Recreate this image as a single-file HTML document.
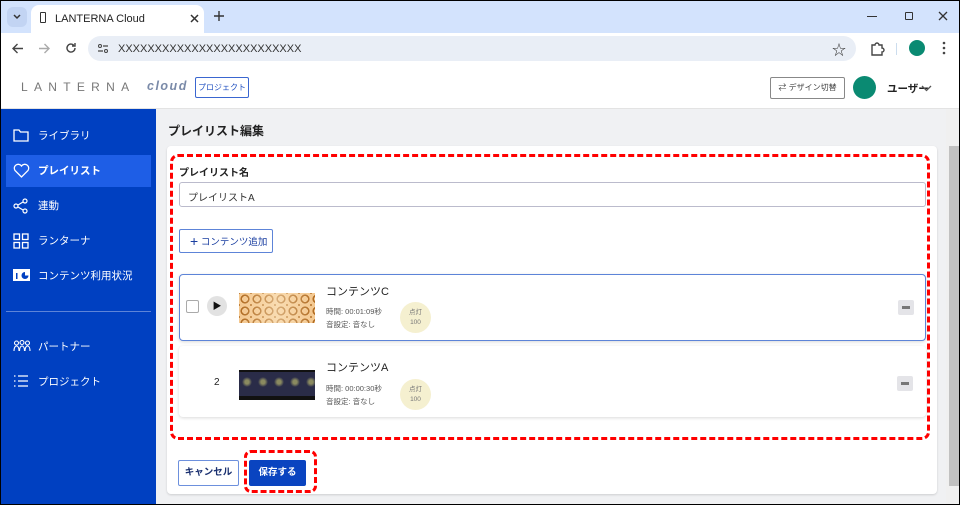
<!DOCTYPE html>
<html><head><meta charset="utf-8"><style>
*{box-sizing:border-box;margin:0;padding:0}
body{width:960px;height:505px;overflow:hidden;font-family:"Liberation Sans","Noto Sans CJK JP",sans-serif;background:#000;position:relative}
.a{position:absolute}
#win{left:1px;top:1px;width:958px;height:503px;background:#f0f1f3;overflow:hidden}
.tabbar{left:0;top:0;width:958px;height:32px;background:#d3e3fd}
.tab{left:30px;top:4px;width:173px;height:28px;background:#fff;border-radius:8px 8px 0 0;font-size:11px;color:#222}
.tool{left:0;top:32px;width:958px;height:31px;background:#fff}
.url{left:87px;top:3px;width:768px;height:25px;background:#e9eef6;border-radius:13px;font-size:11px;color:#333}
.hdr{left:0;top:63px;width:958px;height:45px;background:#fff;border-bottom:1px solid #e3e3e3}
.side{left:0;top:108px;width:155px;height:400px;background:#0040c1;color:#fff;font-size:10.5px}
.si{left:12px;height:20px;line-height:20px;width:140px}
.si span{position:absolute;left:25px;white-space:nowrap}
.si svg{position:absolute;left:0;top:2px}
.card{left:166px;top:145px;width:770px;height:348px;background:#fff;border-radius:4px;box-shadow:0 1px 2px rgba(0,0,0,.15)}
.dash{border:3px dashed #f00;border-radius:8px}
.item{left:178px;width:747px;background:#fff;border-radius:4px}
.meta{font-size:7.5px;color:#555;line-height:13px}
.badge{width:31px;height:31px;border-radius:50%;background:#f5f0d0;color:#777;font-size:6.5px;text-align:center;line-height:10px;padding-top:6px}
.eq{width:16px;height:15px;background:#e4e4e8;border-radius:2px}
.eq:after{content:"";position:absolute;left:4px;top:6px;width:8px;height:3px;background:#777}
</style></head><body>
<div id="win" class="a">
<div class="a tabbar">
 <div class="a" style="left:6px;top:6px;width:20px;height:20px;background:#c2d4f3;border-radius:6px"><svg class="a" style="left:6px;top:7px" width="8" height="6"><path d="M1 1l3 3 3-3" stroke="#333" stroke-width="1.5" fill="none"/></svg></div>
 <div class="a tab"><div class="a" style="left:9px;top:7px;width:6px;height:11px;border:1.5px solid #333;border-radius:1px"></div><span class="a" style="left:24px;top:8px">LANTERNA Cloud</span><svg class="a" style="left:159px;top:9px" width="9" height="9"><path d="M1 1l7 7M8 1l-7 7" stroke="#333" stroke-width="1.5"/></svg></div>
 <svg class="a" style="left:213px;top:10px" width="10" height="10"><path d="M5 0v10M0 5h10" stroke="#333" stroke-width="1.4"/></svg>
 <div class="a" style="left:866px;top:15px;width:10px;height:1.3px;background:#333"></div>
 <div class="a" style="left:904px;top:11px;width:8px;height:8px;border:1.3px solid #333;border-radius:1px"></div>
 <svg class="a" style="left:937px;top:10px" width="10" height="10"><path d="M1 1l8 8M9 1l-8 8" stroke="#333" stroke-width="1.3"/></svg>
</div>
<div class="a tool">
 <svg class="a" style="left:11px;top:10px" width="12" height="11"><path d="M11 5.5H1M5.5 1L1 5.5 5.5 10" stroke="#444" stroke-width="1.4" fill="none"/></svg>
 <svg class="a" style="left:37px;top:10px" width="12" height="11"><path d="M1 5.5h10M6.5 1L11 5.5 6.5 10" stroke="#aaa" stroke-width="1.4" fill="none"/></svg>
 <svg class="a" style="left:64px;top:9px" width="12" height="12"><path d="M10 6a4 4 0 1 1-1.2-2.8M10 1v3H7" stroke="#444" stroke-width="1.4" fill="none"/></svg>
 <div class="a url"><svg class="a" style="left:9px;top:7px" width="12" height="11"><circle cx="3" cy="3" r="1.5" fill="none" stroke="#444"/><path d="M6 3h5M1 8h5" stroke="#444" stroke-width="1.2"/><circle cx="9" cy="8" r="1.5" fill="none" stroke="#444"/></svg><span class="a" style="left:30px;top:7px">XXXXXXXXXXXXXXXXXXXXXXXXX</span><span class="a" style="left:744px;top:4px;font-size:14px;color:#333">☆</span></div>
 <svg class="a" style="left:869px;top:8px" width="15" height="15"><path d="M2 4h3a2 2 0 0 1 4 0h3v3a2 2 0 0 1 0 4v3H2z" stroke="#444" stroke-width="1.4" fill="none"/></svg>
 <div class="a" style="left:895px;top:10px;width:1px;height:12px;background:#cde"></div>
 <div class="a" style="left:908px;top:7px;width:16px;height:16px;border-radius:50%;background:#0a8a72"></div>
 <svg class="a" style="left:941px;top:8px" width="4" height="14"><circle cx="2" cy="2" r="1.3" fill="#444"/><circle cx="2" cy="7" r="1.3" fill="#444"/><circle cx="2" cy="12" r="1.3" fill="#444"/></svg>
</div>
<div class="a hdr">
 <span class="a" style="left:20px;top:16px;font-size:12px;letter-spacing:6.3px;color:#777">LANTERNA</span>
 <span class="a" style="left:146px;top:15px;font-size:12.5px;letter-spacing:1.5px;color:#7a8aa8;font-style:italic;font-weight:bold">cloud</span>
 <div class="a" style="left:194px;top:13px;width:54px;height:21px;border:1px solid #3a66d0;border-radius:2px;font-size:8px;color:#2050c0;text-align:center;line-height:19px">プロジェクト</div>
 <div class="a" style="left:769px;top:13px;width:75px;height:22px;border:1px solid #888;border-radius:2px;font-size:8px;color:#444;text-align:center;line-height:20px">⇄ デザイン切替</div>
 <div class="a" style="left:852px;top:12px;width:23px;height:23px;border-radius:50%;background:#0a8a72"></div>
 <span class="a" style="left:886px;top:17px;font-size:10.5px;color:#222;font-weight:bold">ユーザー</span>
 <svg class="a" style="left:920px;top:21px" width="11" height="7"><path d="M1 1l4.5 4.5L10 1" stroke="#555" stroke-width="1.3" fill="none"/></svg>
</div>
<div class="a side">
 <div class="a si" style="top:17px"><svg width="16" height="15"><path d="M1 2h5l1.5 2H15v9H1z" stroke="#fff" stroke-width="1.3" fill="none"/></svg><span>ライブラリ</span></div>
 <div class="a" style="left:5px;top:46px;width:145px;height:32px;background:#1e5ee6"></div>
 <div class="a si" style="top:52px;font-weight:bold"><svg width="17" height="15"><path d="M8.5 14L2 7.5A3.6 3.6 0 0 1 8.5 3a3.6 3.6 0 0 1 6.5 4.5z" stroke="#fff" stroke-width="1.3" fill="none"/></svg><span>プレイリスト</span></div>
 <div class="a si" style="top:87px"><svg width="16" height="16"><circle cx="3" cy="8" r="2" stroke="#fff" fill="none" stroke-width="1.2"/><circle cx="12" cy="3" r="2" stroke="#fff" fill="none" stroke-width="1.2"/><circle cx="12" cy="13" r="2" stroke="#fff" fill="none" stroke-width="1.2"/><path d="M5 7l5-3M5 9l5 3" stroke="#fff" stroke-width="1.2"/></svg><span>連動</span></div>
 <div class="a si" style="top:122px"><svg width="16" height="16"><g stroke="#fff" stroke-width="1.3" fill="none"><rect x="1" y="1" width="5.5" height="5.5"/><rect x="9.5" y="1" width="5.5" height="5.5"/><rect x="1" y="9.5" width="5.5" height="5.5"/><rect x="9.5" y="9.5" width="5.5" height="5.5"/></g></svg><span>ランターナ</span></div>
 <div class="a si" style="top:157px"><svg width="17" height="14"><rect x="0" y="1" width="17" height="12" fill="#fff"/><rect x="3" y="5" width="1.5" height="6" fill="#0040c1"/><path d="M12 4a3.5 3.5 0 1 0 3.5 3.5H12z" fill="#0040c1"/></svg><span>コンテンツ利用状況</span></div>
 <div class="a" style="left:5px;top:202px;width:145px;height:1px;background:#5d84d8"></div>
 <div class="a si" style="top:228px"><svg width="18" height="14"><g stroke="#fff" stroke-width="1.1" fill="none"><circle cx="3.5" cy="4" r="2"/><circle cx="9" cy="3.5" r="2"/><circle cx="14.5" cy="4" r="2"/><path d="M1 12c0-3 1-5 2.5-5S6 9 6 12M6.5 12c0-3 1-5 2.5-5s2.5 2 2.5 5M12 12c0-3 1-5 2.5-5s2.5 2 2.5 5"/></g></svg><span>パートナー</span></div>
 <div class="a si" style="top:263px"><svg width="16" height="14"><g stroke="#fff" stroke-width="1.2"><path d="M1 2h1.5M1 7h1.5M1 12h1.5M5 2h10M5 7h10M5 12h10"/></g></svg><span>プロジェクト</span></div>
</div>
<span class="a" style="left:167px;top:121px;font-size:12px;font-weight:bold;color:#222">プレイリスト編集</span>
<div class="a card"></div>
<div class="a dash" style="left:169px;top:153px;width:760px;height:286px"></div>
<span class="a" style="left:178px;top:163px;font-size:10px;font-weight:bold;color:#222">プレイリスト名</span>
<div class="a" style="left:178px;top:181px;width:747px;height:25px;border:1px solid #bbc;border-radius:3px;font-size:10px;color:#333;padding:6px 8px">プレイリストA</div>
<div class="a" style="left:178px;top:228px;width:94px;height:24px;border:1px solid #5d84d8;border-radius:2px;font-size:9.5px;color:#1a3ea0;line-height:22px;padding-left:10px"><span style="font-size:14px;vertical-align:-1px">+</span> コンテンツ追加</div>
<div class="a item" style="top:273px;height:67px;border:1px solid #5d84d8;box-shadow:0 1px 3px rgba(0,0,0,.15)">
 <div class="a" style="left:6px;top:25px;width:13px;height:13px;border:1px solid #aaa;border-radius:2px"></div>
 <div class="a" style="left:27px;top:21px;width:20px;height:20px;border-radius:50%;background:#e2e2e2;font-size:9px;text-align:center;line-height:20px;color:#111">▶</div>
 <div class="a" style="left:59px;top:18px;width:76px;height:30px;background:linear-gradient(90deg,rgba(255,240,200,.0),rgba(255,240,210,.5),rgba(255,240,200,0)),repeating-radial-gradient(circle at 6px 6px,#f4c890 0 3px,#b06a20 3px 4.5px);background-size:100% 100%,12px 12px"></div>
 <span class="a" style="left:146px;top:8px;font-size:11px;color:#222">コンテンツC</span>
 <div class="a meta" style="left:146px;top:30px">時間: 00:01:09秒<br>音設定: 音なし</div>
 <div class="a badge" style="left:220px;top:27px">点灯<br>100</div>
 <div class="a eq" style="left:718px;top:25px"></div>
</div>
<div class="a item" style="top:345px;height:71px;box-shadow:0 1px 3px rgba(0,0,0,.15)">
 <span class="a" style="left:35px;top:31px;font-size:10px;color:#222">2</span>
 <div class="a" style="left:60px;top:24px;width:76px;height:30px;background:radial-gradient(circle,#8a8a60 0 2px,transparent 5px) 0 0/16px 20px,#2a2c48;border-bottom:4px solid #111;border-top:2px solid #111"></div>
 <span class="a" style="left:147px;top:13px;font-size:11px;color:#222">コンテンツA</span>
 <div class="a meta" style="left:147px;top:36px">時間: 00:00:30秒<br>音設定: 音なし</div>
 <div class="a badge" style="left:221px;top:33px">点灯<br>100</div>
 <div class="a eq" style="left:718px;top:30px"></div>
</div>
<div class="a" style="left:177px;top:459px;width:61px;height:26px;border:1px solid #6d90dd;border-radius:2px;font-size:9.5px;font-weight:bold;color:#1a3070;text-align:center;line-height:24px">キャンセル</div>
<div class="a dash" style="left:243px;top:449px;width:73px;height:43px;border-radius:7px"></div>
<div class="a" style="left:248px;top:459px;width:57px;height:26px;background:#0a44c0;border-radius:2px;font-size:9.5px;font-weight:bold;color:#fff;text-align:center;line-height:26px">保存する</div>
<div class="a" style="left:945px;top:108px;width:13px;height:395px;background:#f0f0f0"></div>
<div class="a" style="left:948px;top:145px;width:10px;height:340px;background:#c1c1c1"></div>
</div>
</body></html>
